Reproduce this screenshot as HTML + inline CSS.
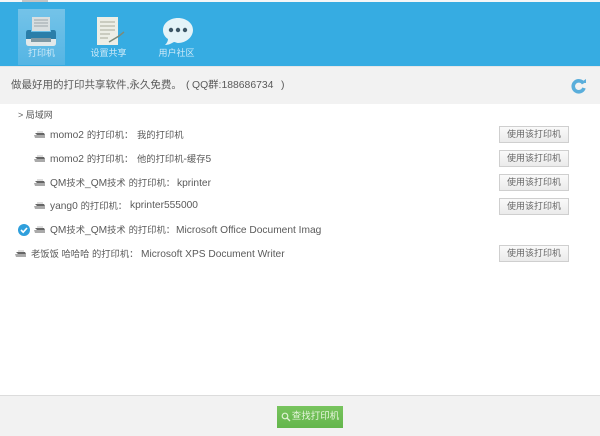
<!DOCTYPE html>
<html><head><meta charset="utf-8">
<style>
html,body{margin:0;padding:0;width:600px;height:436px;overflow:hidden;background:#fff}
body{font-family:"Liberation Sans","Noto Sans CJK SC",sans-serif;position:relative;color:#5a5a5a}
div,svg{position:absolute}
.t{white-space:nowrap;font-size:10.2px;line-height:14px;filter:blur(.3px)}
.t i{font-style:normal;font-size:9.3px}
.btn{left:499px;width:68px;height:15px;border:1px solid #cfcfcf;background:linear-gradient(#fafafa,#ebebeb);font-size:9px;line-height:15px;text-align:center;color:#666;white-space:nowrap}
.nav{color:#cfeaf8;font-size:9px;line-height:12px;white-space:nowrap;text-align:center;filter:blur(.3px)}
</style></head><body>
<div style="left:0;top:0;width:600px;height:2px;background:#f4f6f7"></div>
<div style="left:22px;top:0;width:26px;height:2px;background:#c4c4c4"></div>
<div style="left:0;top:2px;width:600px;height:64px;background:#36ace2"></div>
<div style="left:18px;top:9px;width:47px;height:56px;background:linear-gradient(#74c3e8,#55b5e4)"></div>
<svg style="left:24px;top:15px" width="34" height="34" viewBox="0 0 34 34">
<rect x="8" y="2" width="18" height="14" fill="#d9dfe0"/>
<path d="M10 5h14M10 8h14M10 11h14" stroke="#9aa6aa" stroke-width="1"/>
<path d="M4 15h3v2h20v-2h3q2 0 2 3v6H2v-6q0-3 2-3z" fill="#2a7ea9"/>
<path d="M2 24h30v4q0 3-3 3H5q-3 0-3-3z" fill="#e3e9ea"/>
<rect x="7" y="23" width="20" height="4" fill="#7f98a3"/>
</svg>
<div class="nav" style="left:18px;top:47px;width:47px">打印机</div>
<svg style="left:96px;top:16px" width="32" height="32" viewBox="0 0 32 32">
<rect x="1" y="1" width="21" height="28" fill="#eceee6"/>
<path d="M4 6h15M4 10h15M4 14h15M4 18h10M4 22h8" stroke="#a9a99a" stroke-width="1"/>
<path d="M13 26l10-6 5-4" stroke="#7b8b7b" stroke-width="1.5" fill="none"/>
</svg>
<div class="nav" style="left:85px;top:47px;width:47px">设置共享</div>
<svg style="left:162px;top:17px" width="32" height="30" viewBox="0 0 32 30">
<path d="M16 1C8 1 1 6 1 13c0 4 2 7 5 9 0 2-1 4-3 6 4 0 7-2 9-3 1 0 3 1 4 1 8 0 15-6 15-13S24 1 16 1z" fill="#e4f3f8"/>
<circle cx="9" cy="13" r="2.2" fill="#3d5666"/><circle cx="16" cy="13" r="2.2" fill="#3d5666"/><circle cx="23" cy="13" r="2.2" fill="#3d5666"/>
</svg>
<div class="nav" style="left:153px;top:47px;width:47px">用户社区</div>

<div style="left:0;top:66px;width:600px;height:38px;background:#f2f2f2;border-top:1px solid #e4e6e8;box-sizing:border-box"></div>
<div class="t" style="left:11px;top:78px;font-size:10.5px;line-height:15px">做最好用的打印共享软件,永久免费。</div>
<div class="t" style="left:186px;top:78px;font-size:10.5px;line-height:15px">(</div>
<div class="t" style="left:192px;top:78px;font-size:10.4px;line-height:15px">QQ群:188686734</div>
<div class="t" style="left:281px;top:78px;font-size:10.5px;line-height:15px">)</div>
<svg style="left:571px;top:78px" width="16" height="16" viewBox="0 0 16 16">
<path d="M12.5 5.5A5.5 5.5 0 1 0 13 10" stroke="#5aaedb" stroke-width="3.6" fill="none"/>
<path d="M9 5h6V1z" fill="#5aaedb"/>
</svg>

<div class="t" style="left:18px;top:108px;font-size:9px">&gt; 局域网</div>

<svg width="0" height="0"><defs><g id="p"><path d="M1 3h9l1 2H3z" fill="#666"/><path d="M0 5h11v3H1z" fill="#aaa"/><rect x="3" y="1" width="6" height="2" fill="#ddd"/></g></defs></svg>
<svg style="left:34px;top:130px" width="12" height="9"><use href="#p"/></svg>
<svg style="left:34px;top:154px" width="12" height="9"><use href="#p"/></svg>
<svg style="left:34px;top:178px" width="12" height="9"><use href="#p"/></svg>
<svg style="left:34px;top:201px" width="12" height="9"><use href="#p"/></svg>
<svg style="left:34px;top:225px" width="12" height="9"><use href="#p"/></svg>
<svg style="left:15px;top:249px" width="12" height="9"><use href="#p"/></svg>

<div class="t" style="left:50px;top:128px">momo2 <i>的打印机：</i></div><div class="t" style="left:137px;top:128px"><i>我的打印机</i></div>
<div class="t" style="left:50px;top:152px">momo2 <i>的打印机：</i></div><div class="t" style="left:137px;top:152px"><i>他的打印机</i>-<i>缓存</i>5</div>
<div class="t" style="left:50px;top:176px">QM<i>技术</i>_QM<i>技术</i> <i>的打印机：</i></div><div class="t" style="left:177px;top:177px">kprinter</div>
<div class="t" style="left:50px;top:199px">yang0 <i>的打印机：</i></div><div class="t" style="left:130px;top:199px">kprinter555000</div>
<div class="t" style="left:50px;top:223px">QM<i>技术</i>_QM<i>技术</i> <i>的打印机：</i></div><div class="t" style="left:176px;top:224px">Microsoft Office Document Imag</div>
<div class="t" style="left:31px;top:247px"><i>老饭饭 哈哈哈 的打印机：</i></div><div class="t" style="left:141px;top:248px">Microsoft XPS Document Writer</div>

<svg style="left:18px;top:224px" width="12" height="12" viewBox="0 0 12 12"><circle cx="6" cy="6" r="6" fill="#2f9fdc"/><path d="M3 6l2.2 2.2L9 4" stroke="#fff" stroke-width="1.6" fill="none"/></svg>

<div class="btn" style="top:126px">使用该打印机</div>
<div class="btn" style="top:150px">使用该打印机</div>
<div class="btn" style="top:174px">使用该打印机</div>
<div class="btn" style="top:198px">使用该打印机</div>
<div class="btn" style="top:245px">使用该打印机</div>

<div style="left:0;top:395px;width:600px;height:41px;background:#f2f2f2;border-top:1px solid #dcdcdc;box-sizing:border-box"></div>
<div style="left:277px;top:406px;width:66px;height:22px;background:linear-gradient(#78c45e,#64b64c);color:#e6f5dc;font-size:9.5px;line-height:22px;text-align:center;white-space:nowrap"><span style="padding-left:11px">查找打印机</span></div>
<svg style="left:281px;top:412px" width="10" height="10" viewBox="0 0 10 10"><circle cx="4" cy="4" r="2.8" stroke="#dff2d2" stroke-width="1.2" fill="none"/><path d="M6 6l3 3" stroke="#dff2d2" stroke-width="1.3"/></svg>
</body></html>
